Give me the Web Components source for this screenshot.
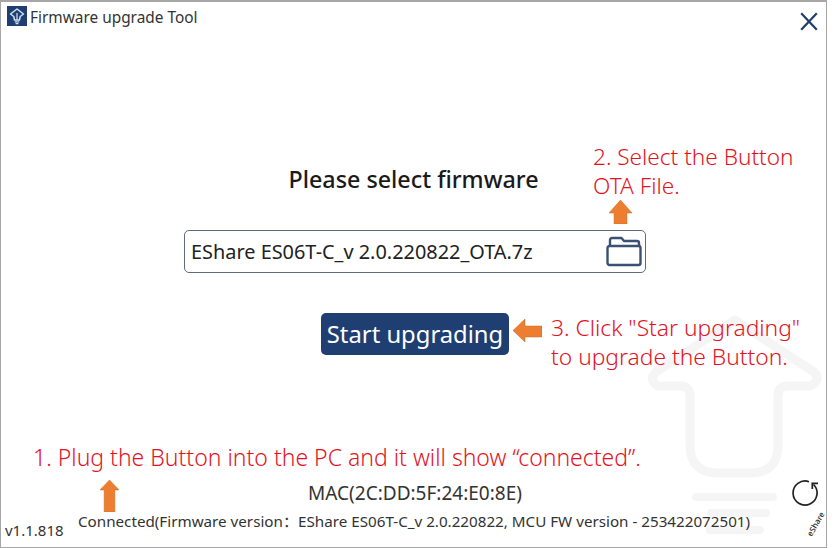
<!DOCTYPE html>
<html lang="en"><head><meta charset="utf-8"><title>Firmware upgrade Tool</title>
<style>
html,body{margin:0;padding:0;background:#fff}
body{font-family:"Noto Sans","Noto Sans CJK SC",sans-serif;color:#222}
</style></head><body>
<fw-window>
  <fw-watermark slot="under"></fw-watermark>
  <fw-titlebar slot="top">Firmware upgrade Tool</fw-titlebar>
  <fw-heading>Please select firmware</fw-heading>
  <fw-picker>EShare ES06T-C_v 2.0.220822_OTA.7z</fw-picker>
  <fw-button>Start upgrading</fw-button>
  <fw-status mac="MAC(2C:DD:5F:24:E0:8E)" version="v1.1.818">Connected(Firmware version：EShare ES06T-C_v 2.0.220822, MCU FW version - 253422072501)</fw-status>
  <fw-note slot="over" style="left:592px;top:140px;font-size:22.6px">2. Select the Button<br>OTA File.</fw-note>
  <fw-note slot="over" style="left:550px;top:311px;font-size:22.8px">3. Click "Star upgrading"<br>to upgrade the Button.</fw-note>
  <fw-note slot="over" style="left:32px;top:441px;font-size:23px">1. Plug the Button into the PC and it will show “connected”.</fw-note>
  <fw-arrow slot="over" dir="up" head=".54" style="left:608px;top:198px;width:23px;height:24px"></fw-arrow>
  <fw-arrow slot="over" dir="left" style="left:512px;top:317px;width:29px;height:23px"></fw-arrow>
  <fw-arrow slot="over" dir="up" head=".31" style="left:99px;top:478px;width:19px;height:32px"></fw-arrow>
  <fw-refresh slot="over"></fw-refresh>
</fw-window>
<script>
function def(name,css,html){
  customElements.define(name,class extends HTMLElement{
    constructor(){super();this.attachShadow({mode:'open'});}
    connectedCallback(){this.shadowRoot.innerHTML='<style>'+css+'</style>'+(typeof html==='function'?html(this):html);}
  });
}
def('fw-window',`
:host{display:block;position:relative;box-sizing:border-box;width:827px;height:548px;border:1px solid #a6a6a6;border-top-width:2px;background:#fff;overflow:hidden}
.col{position:relative;display:flex;flex-direction:column;align-items:center;height:100%;box-sizing:border-box}
.top{align-self:stretch}
`,`<slot name="under"></slot><div class="col"><div class="top"><slot name="top"></slot></div><slot></slot></div><slot name="over"></slot>`);
def('fw-titlebar',`
:host{display:flex;align-items:center;gap:3px;height:32px;padding:0 8px 0 6px;font-size:15.4px;color:#333}
.t{flex:1;margin-top:-2px}
.logo{width:20px;height:20px;margin-top:-4px;flex:none}
.x{width:18px;height:19px;margin-top:6px;flex:none}
`,`<svg class="logo" viewBox="0 0 20 20"><rect width="20" height="20" fill="#1f3f73"/><path d="M10 3 16.500 8 13.200 10.500 12.500 14H7.500L6.800 10.500 3.500 8Z" fill="none" stroke="#cfe0f2" stroke-width="1.500" stroke-linejoin="round"/><path d="M10 7V14M7.800 15.800h4.400M8.600 17.600h2.800" stroke="#cfe0f2" stroke-width="1.200"/></svg>
<span class="t"><slot></slot></span>
<svg class="x" viewBox="0 0 18 19"><path d="M1.200 1.200 16.800 17.800M16.800 1.200 1.200 17.800" stroke="#1f3f6b" stroke-width="2.200" fill="none"/></svg>`);
def('fw-heading',`:host{display:block;margin-top:128px;font-size:23.3px;line-height:34px;font-weight:500;color:#1a1a1a}`,`<slot></slot>`);
def('fw-picker',`
:host{display:flex;align-items:center;justify-content:space-between;box-sizing:border-box;width:462px;height:43px;margin-top:34px;margin-left:3px;padding:0 3px 0 6px;border:1.500px solid #5d6b80;border-radius:5px;font-size:19.9px;color:#222}
svg{width:36px;height:31px;flex:none}
`,`<slot></slot><svg viewBox="0 0 36 31" fill="none" stroke="#3a5172" stroke-width="2.400" stroke-linejoin="round"><path d="M4 10V4a2 2 0 0 1 2-2h9.500l2.500 3h13a2 2 0 0 1 2 2v3"/><path d="M3.500 10h29a2 2 0 0 1 2 2v15a2 2 0 0 1-2 2h-29a2 2 0 0 1-2-2V12a2 2 0 0 1 2-2z"/></svg>`);
def('fw-button',`
:host{display:flex;align-items:center;justify-content:center;box-sizing:border-box;width:188px;height:42px;margin-top:40px;margin-left:3px;background:#1f3f73;border-radius:5px;color:#fff;font-size:23.8px;font-weight:400}
`,`<slot></slot>`);
def('fw-status',`
:host{display:block;position:relative;align-self:stretch;margin-top:auto;height:67px;font-size:15.2px;color:#333}
.mac{position:absolute;left:0;right:0;top:0;text-align:center;font-size:19px;line-height:26px;margin-left:3px}
.c{position:absolute;left:77px;top:29px;line-height:24px;white-space:nowrap}
.v{position:absolute;left:4px;top:38px;line-height:24px;font-size:15px}
`,h=>`<div class="mac">${h.getAttribute('mac')}</div><div class="c"><slot></slot></div><div class="v">${h.getAttribute('version')}</div>`);
def('fw-watermark',`
:host{position:absolute;left:639px;top:308px;width:186px;height:230px;display:block}
svg{display:block;width:100%;height:100%}
`,`<svg viewBox="640 310 186 230" fill="none" stroke="#f5f5f5" stroke-width="9" stroke-linecap="round" stroke-linejoin="round"><path d="M735 320 656 372Q648 380 658 386H680Q690 386 690 396V445Q690 473 718 473H750Q778 473 778 445V396Q778 386 788 386H810Q822 380 814 372Z"/><path d="M696 497H773M711 513H766M710 530H760" stroke-width="8"/></svg>`);
def('fw-note',`:host{position:absolute;display:block;font-size:22px;line-height:29px;font-weight:300;color:#e3141f;white-space:nowrap}`,`<slot></slot>`);
def('fw-arrow',`:host{position:absolute;display:block}svg{display:block;width:100%;height:100%}`,h=>{
  const w=parseFloat(h.style.width),H=parseFloat(h.style.height),a=parseFloat(h.getAttribute('head')||'.4');
  return h.getAttribute('dir')==='left'
  ?`<svg viewBox="0 0 29 23"><path d="M0 11.500 12 0V7H29V18H12V23Z" fill="#ed7d31" stroke="#c9691f" stroke-width=".5"/></svg>`
  :`<svg viewBox="0 0 ${w} ${H}"><path d="M${w/2} 0 ${w} ${H*a}H${w*.78}V${H}H${w*.22}V${H*a}H0Z" fill="#ed7d31" stroke="#c9691f" stroke-width=".5"/></svg>`;
});
def('fw-refresh',`
:host{position:absolute;left:790px;top:477px;width:34px;height:62px;display:block}
svg{position:absolute;left:0;top:0;width:28px;height:30px}
span{position:absolute;left:12px;top:41px;width:24px;text-align:center;font-size:8px;line-height:10px;font-weight:500;color:#222;transform:rotate(-60deg);white-space:nowrap}
`,`<svg viewBox="791 480 28 30" fill="none" stroke="#222" stroke-width="1.700"><path d="M809 482.700A12 12 0 1 0 813.500 485.500"/><path d="M818 484.300H812.300V490"/></svg><span>eShare</span>`);
</script>
</body></html>
